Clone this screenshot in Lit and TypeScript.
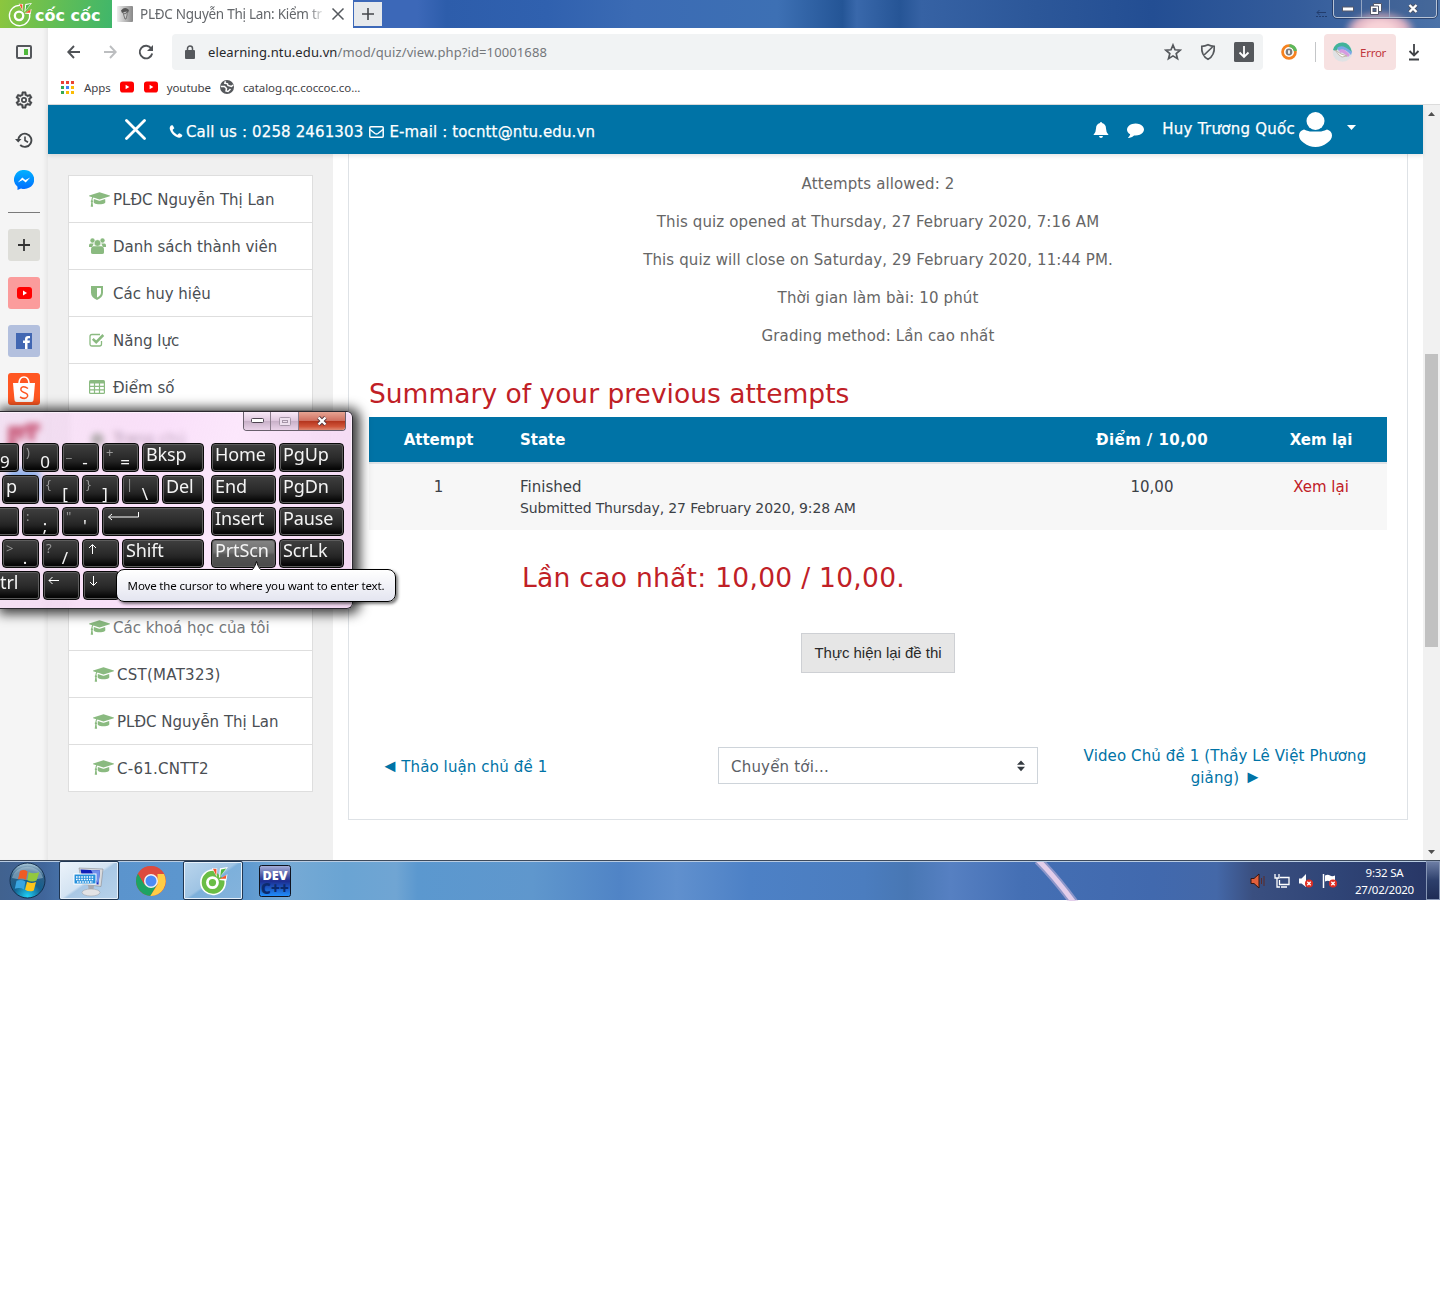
import { LitElement, html, svg, css } from "lit";
import { customElement } from "lit/decorators.js";

const page = css`
  * { box-sizing: border-box; }
  svg { display: block; flex: none; }
  span, a { white-space: nowrap; }
`;

const FA = {
  phone: "M1600 1240q0 27-10 70.5t-21 68.5q-21 50-122 106-94 51-186 51-27 0-53-3.5t-57.5-12.5-47-14.5-55.5-20.5-49-18q-98-35-175-83-127-79-264-216t-216-264q-48-77-83-175-3-9-18-49t-20.5-55.5-14.5-47-12.5-57.5-3.5-53q0-92 51-186 56-101 106-122 25-11 68.5-21t70.5-10q14 0 21 3 18 6 53 76 11 19 30 54t35 63.5 31 53.5q3 4 17.5 25t21.5 35.5 7 28.5q0 20-28.5 50t-62 55-62 53-28.5 46q0 9 5 22.5t8.5 20.5 14 24 11.5 19q76 137 174 235t235 174q2 1 19 11.5t24 14 20.5 8.5 22.5 5q18 0 46-28.5t53-62 55-62 50-28.5q14 0 28.5 7t35.5 21.5 25 17.5q25 15 53.5 31t63.5 35 54 30q70 35 76 53 3 7 3 21z",
  comment: "M1792 896q0 174-120 321.5t-326 233-450 85.5q-70 0-145-8-198 175-460 242-49 14-114 22-17 2-30.5-9t-17.5-29v-1q-3-4-.5-12t2-10 4.5-9.5l6-9 7-8.5 8-9q7-8 31-34.5t34.5-38 31-39.5 32.5-51 27-59 26-76q-157-89-247.5-220t-90.5-281q0-130 71-248.5t191-204.5 286-136.5 348-50.5q244 0 450 85.5t326 233 120 321.5z",
  cap: "M1774 836l18 316q4 69-82 128t-235 93.5-323 34.5-323-34.5-235-93.5-82-128l18-316 574 181q22 7 48 7t48-7zm530-324q0 23-22 31l-1120 352q-4 1-10 1t-10-1l-652-206q-43 34-71 111.5t-34 178.5q63 36 63 109 0 69-58 107l58 433q2 14-8 25-9 11-24 11h-192q-15 0-24-11-10-11-8-25l58-433q-58-38-58-107 0-73 65-111 11-207 98-330l-333-104q-22-8-22-31t22-31l1120-352q4-1 10-1t10 1l1120 352q22 8 22 31z",
};

const youtube = (w: number, h: number) => html`<svg width=${w} height=${h} viewBox="0 0 15 12"><rect width="15" height="12" rx="3" fill="#f00"/><path d="M6 3.6v4.8L10 6z" fill="#fff"/></svg>`;

const coccoc = (s: number, fill: string) => html`<svg width=${s} height=${s} viewBox="0 0 28 28">
  <path d="M14.500 3.800A11.400 11.400 0 1 0 25.300 13.200" fill=${fill} stroke="#fff" stroke-width="1.500"/>
  <path d="M14 5l6 8 5.500 2-10-2z" fill=${fill}/>
  <circle cx="13.500" cy="15.500" r="4.700" fill="none" stroke="#fff" stroke-width="2.600"/>
  <path d="M13 2l5 .3-.5 8z M20.500 2.200L28 1l-8.500 10.500z M19.500 13l8-5.200-1 6z" fill="#fff"/>
  <path d="M14 2.600l3.200.2-.1 6.200z M20.500 12l6-3.600-.5 3.600z" fill="#f4552d"/><path d="M21.500 3.300l4.800-1-5.600 7.500z" fill="#4fb748"/>
</svg>`;

@customElement("title-bar")
class TitleBar extends LitElement {
  static styles = [page, css`
    :host { display: flex; height: 28px; position: relative; overflow: hidden; font-family: "Noto Sans", sans-serif;
      background: linear-gradient(90deg, #3c68b8 27%, #3c68b8 29%, #2d5dab 31%, #3061af 38%, #3b6bb4 44%, #3d70b4 54%, #245596 58.500%, #3968ab 59.500%, #265596 62.500%, #3662a4 64%, #2c5799 72%, #234e93 80%, #345c9b 90%, #4b72a8 100%); }
    .glow { position: absolute; right: 24px; bottom: -22px; width: 72px; height: 40px; border-radius: 50%; background: radial-gradient(#f8d3d8 25%, #e0b4c4 50%, transparent 72%); filter: blur(2px); }
    .logo { width: 112px; padding-left: 7px; display: flex; align-items: center; gap: 3px; background: linear-gradient(100deg, #8cc63e, #5fbd57 55%, #3fb66b); color: #fff; }
    .word { font: 700 16px/26px "DejaVu Sans", sans-serif; padding-top: 3px; }
    .tab { width: 241px; background: #fff; display: flex; align-items: center; padding-left: 5px; }
    .name { width: 191px; margin-left: 7px; font-size: 13.500px; letter-spacing: -.27px; color: #64676b; -webkit-mask: linear-gradient(90deg, #000 88%, transparent 97%); }
    .new { margin: 2px 0 0 1px; width: 28px; height: 24px; background: #e6e9ec; display: grid; place-items: center; }
    .ctl { position: relative; margin: 0 3px 0 auto; width: 104px; height: 18px; border: 1px solid #b8c4d6; border-top: 0; border-radius: 0 0 4px 4px; outline: 1px solid rgba(20,35,70,.55); display: flex; background: rgba(60,85,130,.35); }
    .ctl div { display: grid; place-items: center; flex: 28; border-right: 1px solid #93a5c2; }
    .ctl div:last-child { flex: 47; border: 0; }
    .dash { position: absolute; left: 1316px; top: 10px; }
  `];
  render() {
    return html`<div class="logo">${coccoc(25, "none")}<span class="word">cốc cốc</span></div>
      <div class="tab"><svg width="16" height="16" viewBox="0 0 16 16"><defs><linearGradient id="g"><stop stop-color="#eee"/><stop offset="1" stop-color="#888"/></linearGradient></defs><rect width="16" height="16" rx="1" fill="url(#g)"/><path d="M4 4.500Q8 0 12 4l-1 3-1-1.500-3 .5-2 1z" fill="#555"/><path d="M6 6.500q2 3 4-.5v3L9 13H8z" fill="#ccc" stroke="#555" stroke-width=".7"/></svg>
        <span class="name">PLĐC Nguyễn Thị Lan: Kiểm tr</span>
        <svg width="14" height="14" viewBox="0 0 14 14"><path d="M1.500 1.500l11 11m0-11l-11 11" stroke="#54585d" stroke-width="1.500"/></svg></div>
      <div class="new"><svg width="12" height="12"><path d="M6 0v12M0 6h12" stroke="#44474b" stroke-width="1.600"/></svg></div>
      <div class="glow"></div>
      <svg class="dash" width="12" height="8"><path d="M1 2.500h9M3.500 0L1 2.500 3.500 5" stroke="#223c6c" fill="none"/><path d="M0 6.500h11" stroke="#223c6c" stroke-dasharray="2 1"/></svg>
      <div class="ctl"><div><svg width="14" height="8"><rect x="1.500" y="2" width="11" height="4" fill="#fff" stroke="#54596a"/></svg></div>
        <div><svg width="12" height="12"><path d="M3.500.5h8v8h-8z" fill="#fff" stroke="#54596a"/><path d="M.5 3h8v8.500h-8z" fill="#fff" stroke="#54596a"/><rect x="3" y="5.500" width="3" height="3" fill="#496595" stroke="#54596a"/></svg></div>
        <div><svg width="14" height="12" viewBox="0 0 14 12"><path d="M3.500 2l7 7M10.500 2l-7 7" stroke="#4c5467" stroke-width="4.200"/><path d="M3.500 2l7 7M10.500 2l-7 7" stroke="#fff" stroke-width="2.400"/></svg></div></div>`;
  }
}

@customElement("side-rail")
class SideRail extends LitElement {
  static styles = [page, css`
    :host { display: flex; flex-direction: column; align-items: center; width: 48px; background: #f5f5f5; padding-top: 12px; box-shadow: inset -5px 0 4px -3px #e4e4e4; }
    .ic { height: 24px; display: grid; place-items: center; margin-bottom: 24px; }
    .ic.tight { margin-bottom: 16px; }
    .rule { width: 32px; height: 1px; background: #7a7a7a; margin: 4px 0 16px; }
    .tile { width: 32px; height: 32px; border-radius: 3px; display: grid; place-items: center; margin-bottom: 16px; }
    .add { background: #deded9; } .yt { background: #fb9c9c; } .fb { background: #b3c0de; } .sp { background: #ff5722; } .blue { background: #1a8fe0; height: 30px; }
  `];
  render() {
    return html`
      <div class="ic"><svg width="16" height="14"><rect x="1" y="1" width="14" height="12" rx="1" fill="none" stroke="#54575b" stroke-width="2"/><rect x="8" y="4" width="4" height="6" fill="#50b83c"/></svg></div>
      <div class="ic tight"><svg width="20" height="20" viewBox="0 0 24 24" fill="#44474a"><path d="M19.430 12.980c.04-.32.070-.64.070-.98 0-.34-.030-.66-.070-.98l2.110-1.650c.19-.15.240-.42.120-.64l-2-3.460c-.09-.16-.26-.25-.44-.25-.06 0-.12.010-.17.030l-2.490 1c-.52-.4-1.080-.73-1.690-.98l-.38-2.650A.488.488 0 0014 2h-4c-.25 0-.46.180-.49.420l-.38 2.650c-.61.250-1.170.590-1.690.98l-2.490-1c-.06-.02-.12-.03-.18-.03-.17 0-.34.090-.43.250l-2 3.460c-.13.220-.07.490.12.640l2.110 1.650c-.04.320-.07.650-.07.980s.030.660.070.980l-2.110 1.650c-.19.150-.24.420-.12.640l2 3.460c.09.160.26.250.44.250.060 0 .12-.01.17-.03l2.490-1c.52.400 1.080.730 1.690.980l.38 2.650c.030.240.240.420.490.420h4c.25 0 .46-.18.490-.42l.38-2.650c.61-.25 1.170-.59 1.690-.98l2.490 1c.060.020.12.030.18.030.17 0 .34-.09.430-.25l2-3.460c.12-.22.070-.49-.12-.64l-2.110-1.650zm-1.980-1.710c.040.310.050.520.050.730s-.02.430-.05.730l-.14 1.130.890.700 1.080.840-.7 1.210-1.270-.51-1.040-.42-.9.680c-.43.320-.84.560-1.250.730l-1.060.430-.16 1.130-.2 1.350h-1.400l-.19-1.350-.16-1.130-1.060-.43c-.43-.18-.83-.41-1.230-.71l-.91-.7-1.060.430-1.270.51-.7-1.210 1.080-.84.890-.7-.14-1.130c-.03-.31-.05-.54-.05-.74s.020-.43.050-.73l.14-1.130-.89-.7-1.080-.84.700-1.210 1.270.51 1.040.420.900-.68c.43-.32.84-.56 1.250-.73l1.060-.43.160-1.130.2-1.350h1.390l.19 1.350.16 1.130 1.060.430c.43.180.83.410 1.230.71l.91.700 1.060-.43 1.270-.51.700 1.210-1.070.85-.89.700.14 1.130z" stroke="#44474a" stroke-width=".5"/><circle cx="12" cy="12" r="2.600" fill="none" stroke="#44474a" stroke-width="2"/></svg></div>
      <div class="ic tight"><svg width="18" height="16" viewBox="0 0 18 16" fill="none" stroke="#44474a" stroke-width="1.900"><path d="M3.200 8.500A6.600 6.600 0 1 1 5.200 13"/><path d="M10 4.500V8.500l3 1.800" stroke-width="1.600"/><path d="M0 7h6.500L3.200 10.500z" fill="#44474a" stroke="none"/></svg></div>
      <div class="ic tight"><svg width="20" height="20" viewBox="0 0 20 20"><defs><linearGradient id="m" x2="0" y2="1"><stop stop-color="#00b2ff"/><stop offset="1" stop-color="#006aff"/></linearGradient></defs><path d="M10 0a10 9.500 0 1 1-3 18.500L3.500 20v-3.200A9.500 9.500 0 0 1 10 0z" fill="url(#m)"/><path d="M3.800 12.500L8.300 7.500l3 2.500 4.900-2.500-4.500 5-3-2.500z" fill="#fff"/></svg></div>
      <div class="rule"></div>
      <div class="tile add"><svg width="12" height="12"><path d="M6 0v12M0 6h12" stroke="#333" stroke-width="1.800"/></svg></div>
      <div class="tile yt">${youtube(15, 12)}</div>
      <div class="tile fb"><svg width="16" height="16"><rect width="16" height="16" fill="#4267b2"/><path d="M9 16v-6H7V7.500h2V6q0-3 3-3h2v2.300h-1.500q-1 0-1 1v1.200H14L13.600 10h-2.100v6z" fill="#fff"/></svg></div>
      <div class="tile sp"><svg width="26" height="28" viewBox="0 0 26 28"><path d="M2 8h22l-1.500 17q-.2 2-2 2h-15q-1.800 0-2-2z" fill="#fff"/><path d="M8 8q.5-6 5-6t5 6" fill="none" stroke="#fff" stroke-width="1.600"/><path d="M17 13.500Q13 10.500 10.500 12.500 8.500 15.500 12.500 17.200 17.500 18.600 16.500 21.500 14.500 25 9 22" fill="none" stroke="#ff5722" stroke-width="1.500"/></svg></div>
      <div class="tile"><svg width="32" height="32"><path d="M0 5h18v-3h14v8h-5v10h-7v-9h-4v8h-6v-5H8v15H0z" fill="#a80018"/></svg></div>
      <div class="tile blue"></div>`;
  }
}

@customElement("browser-bar")
class BrowserBar extends LitElement {
  static styles = [page, css`
    :host { display: block; height: 77px; background: #fff; border-bottom: 1px solid #dcdcdc; font-family: "Noto Sans", sans-serif; }
    .row { display: flex; align-items: center; height: 48px; padding-left: 17px; }
    .nav { display: flex; gap: 18px; margin-right: 17px; }
    .omni { width: 1091px; height: 36px; background: #f1f3f4; border-radius: 4px; display: flex; align-items: center; padding: 0 9px 0 12px; font-size: 13px; letter-spacing: .11px; color: #74777b; }
    .omni span { margin-left: 12px; } .omni b { font-weight: 400; color: #26282b; }
    .tools { margin-left: auto; display: flex; align-items: center; gap: 17px; }
    .colour { margin-left: 17px; }
    .sep { width: 1px; height: 20px; background: #c4c6c8; margin: 0 8px 0 17px; }
    .err { width: 72px; height: 36px; border-radius: 4px; background: #f7e1e1; display: flex; align-items: center; gap: 7px; padding-left: 8px; color: #c0353a; font-size: 11.500px; letter-spacing: -.25px; }
    .dl { margin-left: 12px; }
    .marks { display: flex; align-items: center; height: 22px; padding-left: 13px; font-size: 11.500px; letter-spacing: -.08px; color: #3f4246; }
    .apps { margin: 0 9px 0 10px; } .yt2 { margin: 0 9px 0 10px; display: flex; }
    .cat { margin-left: 9px; } .ytt { margin-right: 9px; }
  `];
  render() {
    const dots = ["#ea4335", "#ea4335", "#ea4335", "#34a853", "#4285f4", "#fbbc05", "#34a853", "#fbbc05", "#fbbc05"];
    return html`<div class="row">
      <div class="nav">
        <svg width="18" height="18" fill="none" stroke="#505357" stroke-width="1.900"><path d="M15 9H4M9 3L3.300 9 9 15"/></svg>
        <svg width="18" height="18" fill="none" stroke="#bcbec0" stroke-width="1.900"><path d="M3 9h11M9 3l5.700 6L9 15"/></svg>
        <svg width="18" height="18" fill="none" stroke="#505357" stroke-width="1.900"><path d="M14.300 5.500A6.300 6.300 0 1 0 15.200 10.500"/><path d="M16 2v6h-6z" fill="#505357" stroke="none"/></svg>
      </div>
      <div class="omni"><svg width="12" height="14"><rect x="1" y="5" width="10" height="9" rx="1" fill="#55585c"/><path d="M3.500 6V3.500a2.500 2.500 0 0 1 5 0V6" fill="none" stroke="#55585c" stroke-width="1.500"/></svg>
        <span><b>elearning.ntu.edu.vn</b>/mod/quiz/view.php?id=10001688</span>
        <div class="tools">
          <svg width="18" height="18" viewBox="0 0 18 18"><path d="M9 2l2 4.800 5.200.4-4 3.400 1.300 5.100L9 12.900l-4.500 2.800 1.300-5.100-4-3.400 5.200-.4z" fill="none" stroke="#55585c" stroke-width="1.700"/></svg>
          <svg width="18" height="18" viewBox="0 0 18 18" fill="none" stroke="#55585c" stroke-width="1.700"><path d="M9 1.800q3 1.500 6.200 1.500.8 9-6.200 13Q2 12.300 2.800 3.300 6 3.300 9 1.800zM4.500 12.500L13.500 4"/></svg>
          <svg width="20" height="20"><rect width="20" height="20" rx="1.500" fill="#55585c"/><path d="M10 4v11M5.500 10.500L10 15l4.500-4.500" fill="none" stroke="#fff" stroke-width="1.800"/></svg>
        </div></div>
      <svg class="colour" width="18" height="18"><circle cx="9" cy="9" r="6.400" fill="#fff" stroke="#f58220" stroke-width="2.800"/><path d="M9.500 2.600a6.400 6.400 0 0 1 5.900 5.500" fill="none" stroke="#5cb85c" stroke-width="3.400"/><circle cx="9" cy="9" r="3.400" fill="#7b7d80"/><rect x="8" y="7" width="2" height="4" rx="1" fill="#eee"/></svg>
      <div class="sep"></div>
      <div class="err"><svg width="21" height="20" viewBox="0 0 21 20"><circle cx="10.500" cy="10" r="9.800" fill="#e0e2e4"/><path d="M1 8Q3 0 11 .4 18 1 20 10L15 8Q8 3 4 9z" fill="#42b39a"/><path d="M5 6q5-5 15 4l-1 3Q12 5 7 9z" fill="#7aa7e6"/><path d="M7 8q5-3 11 5l-2 2Q10 9 8 11z" fill="#d69be0"/><path d="M3 8l6 4 6 2-5 1-3-2z" fill="#fff" stroke="#b9aa9c" stroke-width=".8"/></svg><span>Error</span></div>
      <svg class="dl" width="12" height="18"><path d="M6 1v11M1.500 8L6 12.500 10.500 8" fill="none" stroke="#3f4246" stroke-width="1.800"/><path d="M1 16.500h10" stroke="#3f4246" stroke-width="2"/></svg>
    </div>
    <div class="marks">
      <svg width="13" height="13">${dots.map((c, i) => svg`<rect x=${(i % 3) * 5} y=${Math.floor(i / 3) * 5} width="3" height="3" fill=${c}/>`)}</svg>
      <span class="apps">Apps</span>${youtube(14, 12)}
      <div class="yt2">${youtube(14, 12)}</div>
      <span class="ytt">youtube</span>
      <svg width="14" height="14"><circle cx="7" cy="7" r="7" fill="#55585c"/><path d="M.8 6.500H4.500L6.500 8.500 6 11l2 .5L10.500 9M5.500 1.200L4.800 3.200 7.500 3.800 8 5.500l3.500 1 1.500-1.500" fill="none" stroke="#fff" stroke-width="1.500"/></svg>
      <span class="cat">catalog.qc.coccoc.co...</span>
    </div>`;
  }
}

const capIcon = html`<svg width="21" height="17" viewBox="0 0 2304 1792" preserveAspectRatio="none"><path fill="#8aba80" d=${FA.cap}/></svg>`;
const NAV_ICONS = [
  capIcon,
  html`<svg width="17" height="16" viewBox="0 0 17 16" fill="#8aba80"><circle cx="3.500" cy="2.500" r="2.200"/><circle cx="13.500" cy="2.500" r="2.200"/><path d="M0 9V7.500Q0 5.500 1.500 5.500h3.300L3 9zM17 9V7.500q0-2-1.500-2h-3.300L14 9z"/><circle cx="8.500" cy="5" r="3.300" stroke="#fff" stroke-width=".5"/><path d="M2 14.500v-2.500q0-3.700 2.700-3.700h7.600q2.700 0 2.700 3.700v2.500q0 1.500-2 1.500h-9q-2 0-2-1.500z"/></svg>`,
  html`<svg class="shield" width="12" height="14" viewBox="0 0 12 14"><path d="M0 0h12v6.500q0 5-6 7.500Q0 11.500 0 6.500z" fill="#8aba80"/><path d="M6 2h4v4.500q0 3.200-4 5z" fill="#fff"/></svg>`,
  html`<svg width="16" height="14" viewBox="0 0 16 14" fill="none" stroke="#8aba80"><path d="M12.500 8v3q0 2-2 2H3q-2 0-2-2V3.500q0-2 2-2h8" stroke-width="1.300"/><path d="M3.800 5.800l3.400 3.400L14.300 2" stroke-width="2.500"/></svg>`,
  html`<svg width="16" height="14" viewBox="0 0 16 14"><rect width="16" height="14" rx="1.500" fill="#8aba80"/><path fill="#fff" d="M1.200 3.500h3.700v2.300H1.200zM6.100 3.500h3.800v2.300H6.100zM11.100 3.500h3.700v2.300h-3.700zM1.200 6.900h3.700v2.300H1.200zM6.100 6.900h3.800v2.300H6.100zM11.100 6.900h3.700v2.300h-3.700zM1.200 10.400h3.700v2.300H1.200zM6.100 10.400h3.800v2.300H6.100zM11.100 10.400h3.700v2.300h-3.700z"/></svg>`,
];

@customElement("quiz-page")
class QuizPage extends LitElement {
  static styles = [page, css`
    :host { display: flex; flex: 1; min-height: 0; font: 15px/22px "DejaVu Sans", sans-serif; color: #666; }
    .view { width: 1375px; display: flex; flex-direction: column; min-height: 0; }
    .head { height: 49px; flex: none; background: #0073a6; color: #fff; display: flex; align-items: center; padding: 0 67px 0 77px; z-index: 1; box-shadow: 0 2px 4px rgba(0,0,0,.1); letter-spacing: .135px; }
    .head span { -webkit-text-stroke: .25px #fff; }
    .call { margin-left: 22px; display: flex; align-items: center; padding-top: 4px; }
    .phone { margin: 0 2px 0 0; } .mail { margin: 0 5px 0 6px; }
    .user { margin-left: auto; display: flex; align-items: center; letter-spacing: .26px; }
    .who { padding-bottom: 2px; } .chat { margin: 0 18px; } .face { margin: 0 15px 0 4px; } .caret { margin-top: -4px; }
    .cols { flex: 1; display: flex; min-height: 0; }
    .drawer { width: 285px; background: #f0f0f0; padding: 21px 20px 0; }
    .list { background: #fff; border: 1px solid #dedede; height: 617px; width: 245px; }
    .item { height: 47px; border-bottom: 1px solid #dedede; display: flex; align-items: center; padding-left: 20px; color: #4a4e53; }
    .item span { padding-top: 2px; }
    .item:last-child { border: 0; height: 45px; }
    .ico { width: 24px; flex: none; display: flex; } .shield { margin-left: 2px; }
    .sub { padding-left: 24px; } .dim { color: #75787b; } .code { letter-spacing: .27px; }
    .hidden { height: 193px; border-bottom: 1px solid #dedede; padding: 17px 0 0 20px; color: #222; display: flex; }
    .dot { width: 13px; height: 13px; border-radius: 50%; background: #43703b; margin: 5px 9px 0 2px; }
    .card { width: 1060px; height: 666px; margin-left: 15px; border: 1px solid #dee2e6; border-top: 0; padding: 18px 20px 0; letter-spacing: .12px; }
    .p { text-align: center; height: 38px; line-height: 24px; }
    h3 { margin: 0; font-size: 26.5px; line-height: 32px; font-weight: 400; color: #c02026; letter-spacing: 0; }
    .sum { margin-top: 16px; height: 39px; line-height: 31px; }
    .grid { display: grid; grid-template-columns: 139px 541px 206px 132px; letter-spacing: 0; }
    .th { height: 47px; background: #0073a6; color: #fff; font-weight: 700; border-bottom: 2px solid #dee2e6; line-height: 46px; text-align: center; }
    .pts { letter-spacing: .43px; }
    .td { height: 66px; background: #f7f7f7; color: #3c4146; padding-top: 12px; text-align: center; }
    .left { text-align: left; padding-left: 12px; }
    .small { font-size: 14px; line-height: 21px; letter-spacing: -.14px; display: block; } .td .red { color: #c02026; }
    .best { margin: 32px 0 0 153px; letter-spacing: .28px; }
    .btn { margin: 39px auto 0; width: 154px; height: 40px; background: #e6e6e6; border: 1px solid #ced0d4; display: grid; place-items: center; color: #2a2a2a; font-family: "Liberation Sans", sans-serif; letter-spacing: -.03px; }
    .foot { display: flex; margin-top: 71px; color: #0073a6; }
    .prev { width: 349px; padding: 12px 0 0 12px; }
    .tri { font-family: "Liberation Sans", sans-serif; font-size: 18px; letter-spacing: -2.500px; line-height: 1; }
    .sel { width: 320px; height: 37px; margin-top: 3px; border: 1px solid #ced4da; display: flex; align-items: center; justify-content: space-between; padding: 0 11px 0 12px; color: #5b6066; letter-spacing: .2px; }
    .sel span { padding-top: 3px; }
    .next { width: 284px; margin: 1px 0 0 45px; display: flex; flex-direction: column; align-items: center; }
    .scroll { width: 17px; background: #f1f1f1; padding: 7px 2px 6px; display: flex; flex-direction: column; align-items: center; }
    .thumb { width: 13px; height: 293px; background: #c1c1c1; margin-top: 238px; margin-bottom: auto; }
  `];
  render() {
    const items = ["PLĐC Nguyễn Thị Lan", "Danh sách thành viên", "Các huy hiệu", "Năng lực", "Điểm số"];
    return html`<div class="view">
      <div class="head">
        <svg width="21" height="21"><path d="M1.500 1.500l18 18m0-18l-18 18" stroke="#fff" stroke-width="2.800" stroke-linecap="round"/></svg>
        <div class="call"><svg class="phone" width="16" height="16" viewBox="0 0 1792 1792"><path fill="#fff" d=${FA.phone}/></svg>
          <span>Call us : 0258 2461303</span>
          <svg class="mail" width="15" height="12"><rect x=".8" y=".8" width="13.400" height="10.400" rx="1" fill="none" stroke="#fff" stroke-width="1.500"/><path d="M1 3.500l5 4q1.500 1 3 0l5-4" fill="none" stroke="#fff" stroke-width="1.500"/></svg>
          <span>E-mail : tocntt@ntu.edu.vn</span></div>
        <div class="user">
          <svg width="16" height="16" viewBox="0 0 16 16"><path d="M8 0q1 0 1 1 4 1 4 5.500 0 4 2.600 6.500H.4Q3 10.500 3 6.500 3 2 7 1q0-1 1-1zM6 14h4q-.3 2-2 2t-2-2z" fill="#fff"/></svg>
          <svg class="chat" width="17" height="17" viewBox="0 0 1792 1792"><path fill="#fff" d=${FA.comment}/></svg>
          <span class="who">Huy Trương Quốc</span>
          <svg class="face" width="33" height="35"><circle cx="16.500" cy="9" r="9" fill="#fff"/><path d="M5 17.500q5 2 7 2h9q2 0 7-2 5 1.500 5 6 0 4-5 7.500-5 4-11.500 4T5 31q-5-3.500-5-7.500 0-4.500 5-6z" fill="#fff"/></svg>
          <svg class="caret" width="9" height="5"><path d="M0 0h9L4.500 5z" fill="#fff"/></svg>
        </div>
      </div>
      <div class="cols">
        <div class="drawer"><div class="list">
          ${items.map((t, i) => html`<div class="item"><div class="ico">${NAV_ICONS[i]}</div><span>${t}</span></div>`)}
          <div class="hidden"><div class="dot"></div><span>Trang chủ</span></div>
          <div class="item dim"><div class="ico">${capIcon}</div><span>Các khoá học của tôi</span></div>
          <div class="item sub"><div class="ico">${capIcon}</div><span class="code">CST(MAT323)</span></div>
          <div class="item sub"><div class="ico">${capIcon}</div><span>PLĐC Nguyễn Thị Lan</span></div>
          <div class="item sub"><div class="ico">${capIcon}</div><span class="code">C-61.CNTT2</span></div>
        </div></div>
        <div class="card">
          <div class="p"><span>Attempts allowed: 2</span></div>
          <div class="p"><span>This quiz opened at Thursday, 27 February 2020, 7:16 AM</span></div>
          <div class="p"><span>This quiz will close on Saturday, 29 February 2020, 11:44 PM.</span></div>
          <div class="p"><span>Thời gian làm bài: 10 phút</span></div>
          <div class="p"><span>Grading method: Lần cao nhất</span></div>
          <h3 class="sum"><span>Summary of your previous attempts</span></h3>
          <div class="grid">
            <div class="th">Attempt</div><div class="th left">State</div><div class="th pts">Điểm / 10,00</div><div class="th">Xem lại</div>
            <div class="td">1</div><div class="td left">Finished<span class="small">Submitted Thursday, 27 February 2020, 9:28 AM</span></div><div class="td">10,00</div><div class="td"><span class="red">Xem lại</span></div>
          </div>
          <h3 class="best"><span>Lần cao nhất: 10,00 / 10,00.</span></h3>
          <div class="btn"><span>Thực hiện lại đề thi</span></div>
          <div class="foot"><div class="prev"><span><span class="tri">◄</span> Thảo luận chủ đề 1</span></div>
            <div class="sel"><span>Chuyển tới...</span><svg width="9" height="12"><path d="M0 4.800h8L4 .5zM0 6.800h8L4 11.200z" fill="#343a40"/></svg></div>
            <div class="next"><span>Video Chủ đề 1 (Thầy Lê Việt Phương</span><span>giảng) <span class="tri">►</span></span></div></div>
        </div>
      </div>
    </div>
    <div class="scroll"><svg width="7" height="4"><path d="M0 4h7L3.500 0z" fill="#505050"/></svg><div class="thumb"></div><svg width="7" height="4"><path d="M0 0h7L3.500 4z" fill="#505050"/></svg></div>`;
  }
}

type Key = { w: number; t?: string; alt?: string; hot?: boolean; cut?: boolean; gap?: boolean };
const KEYS: Key[][] = [
  [{ w: 19, t: "9", alt: " ", cut: true }, { w: 37, t: "0", alt: ")" }, { w: 37, t: "-", alt: "_" }, { w: 37, t: "=", alt: "+" }, { w: 62, t: "Bksp" }, { w: 65, t: "Home", gap: true }, { w: 65, t: "PgUp" }],
  [{ w: -1 }, { w: 37, t: "p" }, { w: 37, t: "[", alt: "{" }, { w: 37, t: "]", alt: "}" }, { w: 37, t: "\\", alt: "|" }, { w: 42, t: "Del" }, { w: 65, t: "End", gap: true }, { w: 65, t: "PgDn" }],
  [{ w: 19, cut: true }, { w: 37, t: ";", alt: ":" }, { w: 37, t: "'", alt: "\"" }, { w: 102, t: "enter" }, { w: 65, t: "Insert", gap: true }, { w: 65, t: "Pause" }],
  [{ w: -1 }, { w: 37, t: ".", alt: ">" }, { w: 37, t: "/", alt: "?" }, { w: 37, t: "up" }, { w: 82, t: "Shift" }, { w: 65, t: "PrtScn", gap: true, hot: true }, { w: 65, t: "ScrLk" }],
  [{ w: 40, t: "trl", cut: true }, { w: 37, t: "left" }, { w: 37, t: "down" }],
];
const ARROWS: Record<string, unknown> = {
  enter: svg`<path d="M34.500 1v5H4.500M8 3L4.500 6 8 9"/>`,
  up: svg`<path d="M8.500 11V2M5 5l3.500-3.500L12 5"/>`,
  left: svg`<path d="M4 5.500h10M7.500 2L4 5.500 7.500 9"/>`,
  down: svg`<path d="M8.500 1v9M5 7l3.500 3.500L12 7"/>`,
};

@customElement("screen-keyboard")
class ScreenKeyboard extends LitElement {
  static styles = [page, css`
    :host { display: block; width: 353px; height: 198px; border: 1px solid #2c2930; border-left: 0; border-radius: 0 6px 6px 0; box-shadow: inset -1px 1px 0 #fff8, 3px 1px 12px 4px rgba(0,0,0,.75);
      background: linear-gradient(105deg, #efccef80 0, #f5d0f3a8 30%, #f8d5f8b8 42%, #fbe2fbd0 60%, #f6dbf6e8 80%, #f2d8f0 100%); backdrop-filter: blur(3px); font: 18px/22px "Noto Sans", sans-serif; color: #f4f4f4; position: relative; }
    .win { display: flex; width: 103px; height: 19px; margin-left: auto; margin-right: 6px; border: 1px solid #695f6c; border-top: 0; border-radius: 0 0 4px 4px; overflow: hidden; }
    .win div { width: 28px; border-right: 1px solid #8b7c8c; display: grid; place-items: center; background: linear-gradient(#f9e9f8, #ddc5dc 50%, #c8b0c8 51%, #ead3e9); }
    .win .x { width: 47px; border: 0; background: linear-gradient(#e6a493, #cf7060 48%, #b3331c 50%, #cf5338 80%, #dd8872); }
    .row { display: flex; gap: 3px; height: 29px; margin-bottom: 3px; }
    .rows { padding-top: 12px; }
    .key { flex: none; border: 1px solid #0a0a0a; border-radius: 4px; background: linear-gradient(#3f3f3f, #2b2b2b 50%, #222 65%, #060606 92%); box-shadow: inset 0 0 0 1px #5d5d5d; padding: 0 0 0 3px; display: flex; }
    .cut { border-left: 0; border-radius: 0 4px 4px 0; box-shadow: inset -1px 0 0 #5d5d5d, inset 0 1px 0 #5d5d5d, inset 0 -1px 0 #5d5d5d; padding-left: 0; }
    .gap { margin-left: 4px; }
    .hot { background: linear-gradient(#858585, #6f6f6f 45%, #555 55%, #4a4a4a); }
    .alt { color: #999; font-size: 13px; line-height: 17px; width: 12px; }
    .main { font-size: 17px; line-height: 17px; padding-top: 9px; flex: 1; text-align: center; padding-right: 6px; }
    .key.cut .main { padding-right: 10px; }
    .lab { line-height: 20px; letter-spacing: -.12px; }
    .none { width: 0; flex: none; margin-left: -1px; }
    .key svg { margin: 3px 0 0 -2px; }
  `];
  render() {
    return html`<div class="win"><div><svg width="13" height="6"><rect x=".5" y=".5" width="12" height="4" rx="1" fill="#fff" stroke="#4d4350"/></svg></div>
      <div><svg width="12" height="9"><rect x=".5" y=".5" width="11" height="8" rx="1" fill="#eee0ee" stroke="#a696a8"/><rect x="3.500" y="3.500" width="5" height="2" fill="none" stroke="#a696a8"/></svg></div>
      <div class="x"><svg width="14" height="12"><path d="M3.500 2.500l7 7M10.500 2.500l-7 7" stroke="#54353c" stroke-width="4"/><path d="M3.500 2.500l7 7M10.500 2.500l-7 7" stroke="#fff" stroke-width="2.400"/></svg></div></div>
      <div class="rows">${KEYS.map((r) => html`<div class="row">${r.map((k) => k.w < 0 ? html`<div class="none"></div>` : html`
        <div class="key ${k.cut ? "cut" : ""} ${k.gap ? "gap" : ""} ${k.hot ? "hot" : ""}" style="width:${k.w}px">
          ${k.t && ARROWS[k.t] ? html`<svg width="44" height="13" fill="none" stroke="#fff" stroke-width="1">${ARROWS[k.t]}</svg>`
            : k.alt ? html`${k.cut ? "" : html`<span class="alt">${k.alt}</span>`}<span class="main">${k.t}</span>`
            : html`<span class="lab">${k.t ?? ""}</span>`}</div>`)}</div>`)}</div>`;
  }
}

@customElement("task-bar")
class TaskBar extends LitElement {
  static styles = [page, css`
    :host { display: flex; height: 40px; position: relative; align-items: center; border-top: 1px solid #3d4a5c; font: 11.500px/17px "Noto Sans", sans-serif; color: #fff;
      box-shadow: inset 0 1px 0 #b9cce2;
      background: linear-gradient(90deg, #41628f 0, #40659a 3%, #5b94cd 8%, #5d98cf 17%, #76aad5 20%, #6aa4d3 24%, #70a5d3 27.500%, #5b98cf 29%, #5f97cd 37%, #5084c6 43%, #6090ce 47%, #4d81c6 52%, #4b7dbf 60%, #4877b4 63%, #5680c2 66%, #446fb4 71%, #4169ae 80%, #4468a8 84.500%, #3a4f80 87%, #2f4476 93%, #273564 100%); }
    .streak { position: absolute; left: 1020px; top: 1px; }
    .orb { margin-left: 9px; }
    .app { height: 39px; width: 60px; border: 1px solid #1f3652; border-radius: 2px; box-shadow: inset 0 0 0 1px #e6f0fa; background: linear-gradient(145deg, #ecf3fa, #d3e3f2 48%, #a9c8e5 52%, #b7d2ea); display: grid; place-items: center; }
    .one { margin-left: 13px; } .two { margin-left: 17px; background: linear-gradient(145deg, #bad5ec, #9fc4e4 48%, #7db0db 52%, #84b3dc); }
    .chrome { margin-left: 17px; } .dev { margin-left: 16px; }
    .tray { margin-left: auto; display: flex; gap: 8px; }
    .clock { width: 65px; margin: 0 9px 0 14px; text-align: center; letter-spacing: -.22px; }
    .clock span { display: block; }
    .peek { width: 14px; height: 39px; border: 1px solid #8696b5; background: linear-gradient(#6c7da4, #2d3f6b 50%, #1e2c55); }
  `];
  render() {
    const no = svg`<circle cx="11" cy="10.500" r="4" fill="#e02d22"/><path d="M9.300 8.800l3.400 3.400m0-3.400l-3.400 3.400" stroke="#fff" stroke-width="1.300"/>`;
    return html`
      <svg class="streak" width="70" height="39"><path d="M18-2Q36 16 55 42" fill="none" stroke="#d5bfe2" stroke-width="9" opacity=".5"/><path d="M18-2Q36 16 55 42" fill="none" stroke="#e2cdea" stroke-width="5"/></svg>
      <svg class="orb" width="37" height="37" viewBox="0 0 37 37"><defs><radialGradient id="o" cx=".5" cy=".95" r=".9"><stop stop-color="#1fd0f5"/><stop offset=".45" stop-color="#14608f"/><stop offset=".8" stop-color="#2f5f86"/><stop offset="1" stop-color="#9bbcd0"/></radialGradient></defs><circle cx="18.500" cy="18.500" r="17.500" fill="url(#o)" stroke="#14304f"/><path d="M3 16A16 15 0 0 1 34 16Q18 20 3 16z" fill="#cfe0ea" opacity=".4"/><path d="M11 9q4-2 7.500.5L17 18q-3.500-2.500-8-.8z" fill="#ef5b24"/><path d="M19.800 10q4 2.500 10.500.2L27.500 18.500q-4.500 2.200-9.200-.2z" fill="#93c83d"/><path d="M7.500 18.700q5-1.700 9 .8l-1.700 8q-3.500-2.300-9-.8z" fill="#3aa5e0"/><path d="M18 19.800q4 2.200 9 .2l-2.200 8.500q-4.500 2-8.700-.7z" fill="#fcc51b"/></svg>
      <div class="app one"><svg width="32" height="32" viewBox="0 0 32 32"><path d="M6 3l24 1-2 17.500L9 19z" fill="#d8dade" stroke="#8a8d94" stroke-width=".6"/><path d="M7.500 4.500l19.500.9L25.500 19.500 10 17.500z" fill="#1020b8"/><path d="M18 5l9 .4L25.500 19.500z" fill="#6f8eea"/><path d="M15 20l6 1-1 6h-4z" fill="#a9abb0"/><ellipse cx="18" cy="27.500" rx="9" ry="3.500" fill="#e3e3e5" stroke="#9b9da2" stroke-width=".5"/><rect x="1" y="9" width="22" height="10" fill="#2590dc" stroke="#fff"/><path d="M3 12h18M3 14.500h18M4 17h16" stroke="#fff" stroke-width="1.300" stroke-dasharray="1.600 1"/></svg></div>
      <svg class="chrome" width="30" height="30" viewBox="0 0 30 30"><circle cx="15" cy="15" r="15" fill="#dd4b3e"/><path d="M2 7.500A15 15 0 0 0 14.500 30L21 18.500 15 15 8.500 18.500z" fill="#1da362"/><path d="M28 8A15 15 0 0 1 14.300 30L21.500 18.500V8z" fill="#ffcd46"/><path d="M15 8h13a15 15 0 0 0-26-.5L8.500 18.500z" fill="#dd4b3e"/><circle cx="15" cy="15" r="7" fill="#f1f1f1"/><circle cx="15" cy="15" r="5.500" fill="#4c8bf5"/></svg>
      <div class="app two">${coccoc(30, "#6abd45")}</div>
      <svg class="dev" width="32" height="32" viewBox="0 0 32 32"><defs><linearGradient id="d" x2="0" y2="1"><stop stop-color="#a9b2dc"/><stop offset=".3" stop-color="#5560a8"/><stop offset=".5" stop-color="#1c2c90"/><stop offset="1" stop-color="#2090ff"/></linearGradient></defs><rect x=".5" y=".5" width="31" height="31" rx="2" fill="url(#d)" stroke="#10131f"/><text x="16" y="15" text-anchor="middle" textLength="25" lengthAdjust="spacingAndGlyphs" font-family="Open Sans" font-weight="800" font-size="13" fill="#fff">DEV</text><text x="16" y="29" text-anchor="middle" textLength="28" lengthAdjust="spacingAndGlyphs" font-family="Open Sans" font-weight="800" font-size="15" fill="#0b2a6e">C++</text></svg>
      <div class="tray">
        <svg width="16" height="16"><path d="M1 5.500h3L9 1v14L4 10.500H1z" fill="#e2603c" stroke="#37160f"/><path d="M11.500 5v6M14 3v10" stroke="#5b2b2b"/></svg>
        <svg width="16" height="16" fill="none" stroke="#fff" stroke-width="1.300"><path d="M6 4.500h9v7H5.500V7"/><path d="M1 1v4h4V1M3 5v9h3M7 14h6"/></svg>
        <svg width="16" height="16"><path d="M1 5.500h2.500L8 1v13L3.500 10.500H1z" fill="#fff"/>${no}</svg>
        <svg width="16" height="16"><path d="M1.500 1v14" stroke="#fff" stroke-width="1.500"/><path d="M3 2.500q3-1.500 5 0t5 0v6q-3 1.500-5 0t-5 0z" fill="#fff"/>${no}</svg>
      </div>
      <div class="clock"><span>9:32 SA</span><span>27/02/2020</span></div>
      <div class="peek"></div>`;
  }
}

@customElement("app-root")
class AppRoot extends LitElement {
  static styles = [page, css`
    :host { display: block; width: 1440px; height: 1300px; background: #fff; position: relative; overflow: hidden; }
    .desk { height: 900px; display: flex; flex-direction: column; }
    .body { flex: 1; display: flex; min-height: 0; }
    .main { flex: 1; display: flex; flex-direction: column; min-width: 0; background: #fff; }
    .osk { position: absolute; left: 0; top: 411px; }
    .tip { position: absolute; left: 116px; top: 569px; width: 280px; height: 33px; border: 1px solid #000; border-radius: 8px; background: linear-gradient(#fff, #e4e5f0); box-shadow: 2px 2px 3px rgba(0,0,0,.5); display: grid; place-items: center; font: 11.500px/16px "Noto Sans", sans-serif; letter-spacing: -.15px; color: #000; }
    .beak { position: absolute; left: 134px; top: -10px; }
  `];
  render() {
    return html`<div class="desk"><title-bar></title-bar>
      <div class="body"><side-rail></side-rail><div class="main"><browser-bar></browser-bar><quiz-page></quiz-page></div></div>
      <task-bar></task-bar></div>
      <screen-keyboard class="osk"></screen-keyboard>
      <div class="tip"><svg class="beak" width="14" height="12"><path d="M0 11Q3 9 5.500 1.500 8 9 13 11z" fill="#fff"/><path d="M0 9.500h1.500Q4 7 5.500 1.500 7 7 9.500 9.500H12" fill="#fff" stroke="#000"/></svg><span>Move the cursor to where you want to enter text.</span></div>`;
  }
}
